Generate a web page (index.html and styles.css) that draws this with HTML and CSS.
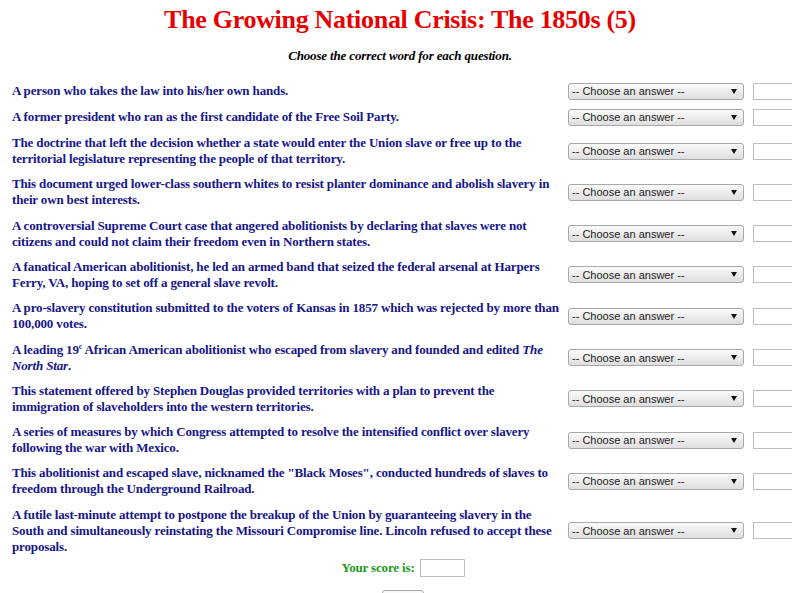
FILE: index.html
```html
<!DOCTYPE html>
<html>
<head>
<meta charset="utf-8">
<link rel="stylesheet" href="styles.css">
</head>
<body>
<h1 class="title">The Growing National Crisis: The 1850s (5)</h1>
<p class="subtitle">Choose the correct word for each question.</p>
<div class="quiz">
<div class="q">A person who takes the law into his/her own hands.</div><div class="sel"><select><option>-- Choose an answer --</option></select></div><input class="ans" type="text">
<div class="q">A former president who ran as the first candidate of the Free Soil Party.</div><div class="sel"><select><option>-- Choose an answer --</option></select></div><input class="ans" type="text">
<div class="q">The doctrine that left the decision whether a state would enter the Union slave or free up to the territorial legislature representing the people of that territory.</div><div class="sel"><select><option>-- Choose an answer --</option></select></div><input class="ans" type="text">
<div class="q">This document urged lower-class southern whites to resist planter dominance and abolish slavery in their own best interests.</div><div class="sel"><select><option>-- Choose an answer --</option></select></div><input class="ans" type="text">
<div class="q">A controversial Supreme Court case that angered abolitionists by declaring that slaves were not citizens and could not claim their freedom even in Northern states.</div><div class="sel"><select><option>-- Choose an answer --</option></select></div><input class="ans" type="text">
<div class="q">A fanatical American abolitionist, he led an armed band that seized the federal arsenal at Harpers Ferry, VA, hoping to set off a general slave revolt.</div><div class="sel"><select><option>-- Choose an answer --</option></select></div><input class="ans" type="text">
<div class="q">A pro-slavery constitution submitted to the voters of Kansas in 1857 which was rejected by more than 100,000 votes.</div><div class="sel"><select><option>-- Choose an answer --</option></select></div><input class="ans" type="text">
<div class="q">A leading 19<sup>c</sup> African American abolitionist who escaped from slavery and founded and edited <i>The North Star</i>.</div><div class="sel"><select><option>-- Choose an answer --</option></select></div><input class="ans" type="text">
<div class="q">This statement offered by Stephen Douglas provided territories with a plan to prevent the immigration of slaveholders into the western territories.</div><div class="sel"><select><option>-- Choose an answer --</option></select></div><input class="ans" type="text">
<div class="q">A series of measures by which Congress attempted to resolve the intensified conflict over slavery following the war with Mexico.</div><div class="sel"><select><option>-- Choose an answer --</option></select></div><input class="ans" type="text">
<div class="q">This abolitionist and escaped slave, nicknamed the "Black Moses", conducted hundreds of slaves to freedom through the Underground Railroad.</div><div class="sel"><select><option>-- Choose an answer --</option></select></div><input class="ans" type="text">
<div class="q">A futile last-minute attempt to postpone the breakup of the Union by guaranteeing slavery in the South and simultaneously reinstating the Missouri Compromise line. Lincoln refused to accept these proposals.</div><div class="sel"><select><option>-- Choose an answer --</option></select></div><input class="ans" type="text">
</div>
<p class="score">Your score is: <input type="text" class="scorebox"></p>
<div class="btnrow"><button class="btn">Score</button></div>
</body>
</html>
```
FILE: styles.css
```css
html { background: #fff; overflow: hidden; }
body {
  margin: 8px;
  background: #fff;
  font-family: "Liberation Serif", "Times New Roman", serif;
}
.title {
  margin: 0;
  text-align: center;
  color: #e60000;
  font-size: 26px;
  line-height: 24px;
  font-weight: bold;
  letter-spacing: -0.3px;
}
.subtitle {
  margin: 17px 0 16px 0;
  text-align: center;
  font-size: 13px;
  line-height: 14px;
  font-weight: bold;
  font-style: italic;
  letter-spacing: -0.15px;
  color: #000;
}
.quiz {
  display: grid;
  grid-template-columns: 548px 176px 42px;
  column-gap: 8px;
  row-gap: 9.3px;
  align-items: center;
  padding: 3.5px 0 3px 4px;
}
.q {
  color: #16168a;
  font-size: 13px;
  line-height: 16px;
  font-weight: bold;
  letter-spacing: -0.15px;
}
.q sup { font-size: 8px; line-height: 0; vertical-align: 5px; }
.sel { position: relative; width: 176px; height: 17px; }
.sel select {
  appearance: none;
  -webkit-appearance: none;
  width: 176px;
  height: 17px;
  box-sizing: border-box;
  font-family: "Liberation Sans", Arial, sans-serif;
  font-size: 11px;
  color: #222;
  border: 1px solid #a8a8a8;
  border-radius: 3px;
  background: linear-gradient(#fbfbfb, #dedede);
  padding: 0 3px;
  display: block;
  margin: 0;
}
.sel::after {
  content: "";
  position: absolute;
  right: 7px;
  top: 6px;
  border-left: 3px solid transparent;
  border-right: 3px solid transparent;
  border-top: 5px solid #111;
  pointer-events: none;
}
.ans, .scorebox {
  width: 41px;
  height: 17px;
  box-sizing: border-box;
  border: 1px solid #bdbdbd;
  background: #fff;
  padding: 0;
  display: block;
  margin: 0 0 0 1px;
}
.score {
  margin: 0;
  height: 20px;
  color: #1a9a1a;
  font-weight: bold;
  font-size: 13px;
  letter-spacing: -0.15px;
  display: flex;
  justify-content: center;
  align-items: center;
  gap: 4px;
  padding-left: 6px;
}
.scorebox { width: 45px; height: 18px; }
.btnrow { text-align: center; margin-top: 12px; padding-left: 6px; }
.btn {
  width: 42px;
  height: 20px;
  font-size: 11px;
  border: 1px solid #aaa;
  border-radius: 3px;
  background: linear-gradient(#fbfbfb, #e4e4e4);
}
```
